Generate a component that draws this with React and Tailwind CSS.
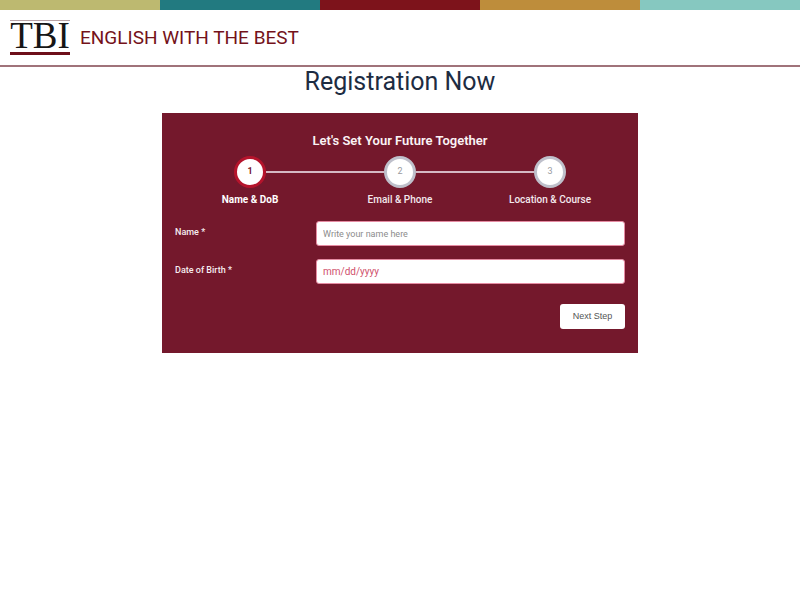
const stripes = ["bg-[#bdb970]", "bg-[#227a80]", "bg-[#7d131b]", "bg-[#be8d3b]", "bg-[#86c8c0]"];

const steps = [
  { number: 1, label: "Name & DoB", active: true },
  { number: 2, label: "Email & Phone", active: false },
  { number: 3, label: "Location & Course", active: false },
];

function Header() {
  return (
    <header>
      <div className="grid h-[10px] grid-cols-5">
        {stripes.map((color) => (
          <div key={color} className={color} />
        ))}
      </div>
      <div className="flex h-[57px] items-center gap-[10px] border-b-2 border-[#a0737a] px-[10px]">
        <a
          href="#"
          className="flex h-[35px] w-[60px] items-start justify-center border-t border-b-[3px] border-t-[#b9a3a6] border-b-[#6d0f19] font-['Liberation_Serif',serif] text-[37px] leading-[30px] text-[#161616]"
        >
          TBI
        </a>
        <span className="text-[19px] leading-6 text-[#74121a]">ENGLISH WITH THE BEST</span>
      </div>
    </header>
  );
}

function Stepper() {
  return (
    <ol className="grid grid-cols-3">
      {steps.map((step, index) => (
        <li key={step.number} className="flex flex-col items-center">
          <div className="flex w-full items-center">
            <span className={index === 0 ? "h-[2px] flex-1" : "h-[2px] flex-1 bg-[#d5b9c4]"} />
            <span
              className={
                step.active
                  ? "flex size-8 items-center justify-center rounded-full border-[3px] border-[#b5142c] bg-white text-[9px] font-bold text-[#74182c]"
                  : "flex size-8 items-center justify-center rounded-full border-[3px] border-[#bfc0cb] bg-white text-[9px] text-[#9a9a9f]"
              }
            >
              {step.number}
            </span>
            <span
              className={index === steps.length - 1 ? "h-[2px] flex-1" : "h-[2px] flex-1 bg-[#d5b9c4]"}
            />
          </div>
          <span
            className={
              step.active
                ? "mt-1 text-[10px] leading-4 font-bold text-white"
                : "mt-1 text-[10px] leading-4 font-medium text-[#f3e8ec]"
            }
          >
            {step.label}
          </span>
        </li>
      ))}
    </ol>
  );
}

function Field({ id, label, placeholder, tone }) {
  return (
    <div className="flex items-start">
      <label htmlFor={id} className="w-[141px] pt-[5px] text-[9px] leading-3 font-medium text-[#f6edf0]">
        {label}
      </label>
      <input
        id={id}
        type="text"
        required
        placeholder={placeholder}
        className={`h-[25px] min-w-0 flex-1 rounded-[3px] border border-[#e58ba2] bg-white px-[6px] outline-none ${tone}`}
      />
    </div>
  );
}

export default function App() {
  return (
    <div className="min-h-screen bg-white font-[Roboto,sans-serif]">
      <Header />
      <main className="mx-auto w-full max-w-[476px]">
        <h1 className="text-center text-[25px] leading-[30px] text-[#1d2c42]">Registration Now</h1>
        <form className="mt-4 bg-[#74182c] px-[13px] pt-5 pb-6" onSubmit={(e) => e.preventDefault()}>
          <h2 className="mb-[7px] text-center text-[13px] leading-4 font-semibold text-[#fbf3f5]">
            Let's Set Your Future Together
          </h2>
          <Stepper />
          <div className="mt-[13px] flex flex-col gap-[13px]">
            <Field
              id="name"
              label="Name *"
              placeholder="Write your name here"
              tone="text-[9px] placeholder:text-[#8c8c8c]"
            />
            <Field
              id="birth-date"
              label="Date of Birth *"
              placeholder="mm/dd/yyyy"
              tone="text-[10px] placeholder:text-[#d0506c]"
            />
          </div>
          <div className="mt-5 flex justify-end">
            <button
              type="submit"
              className="h-[25px] w-[65px] rounded-[3px] bg-white font-['Liberation_Sans',sans-serif] text-[9px] text-[#555555]"
            >
              Next Step
            </button>
          </div>
        </form>
      </main>
    </div>
  );
}
